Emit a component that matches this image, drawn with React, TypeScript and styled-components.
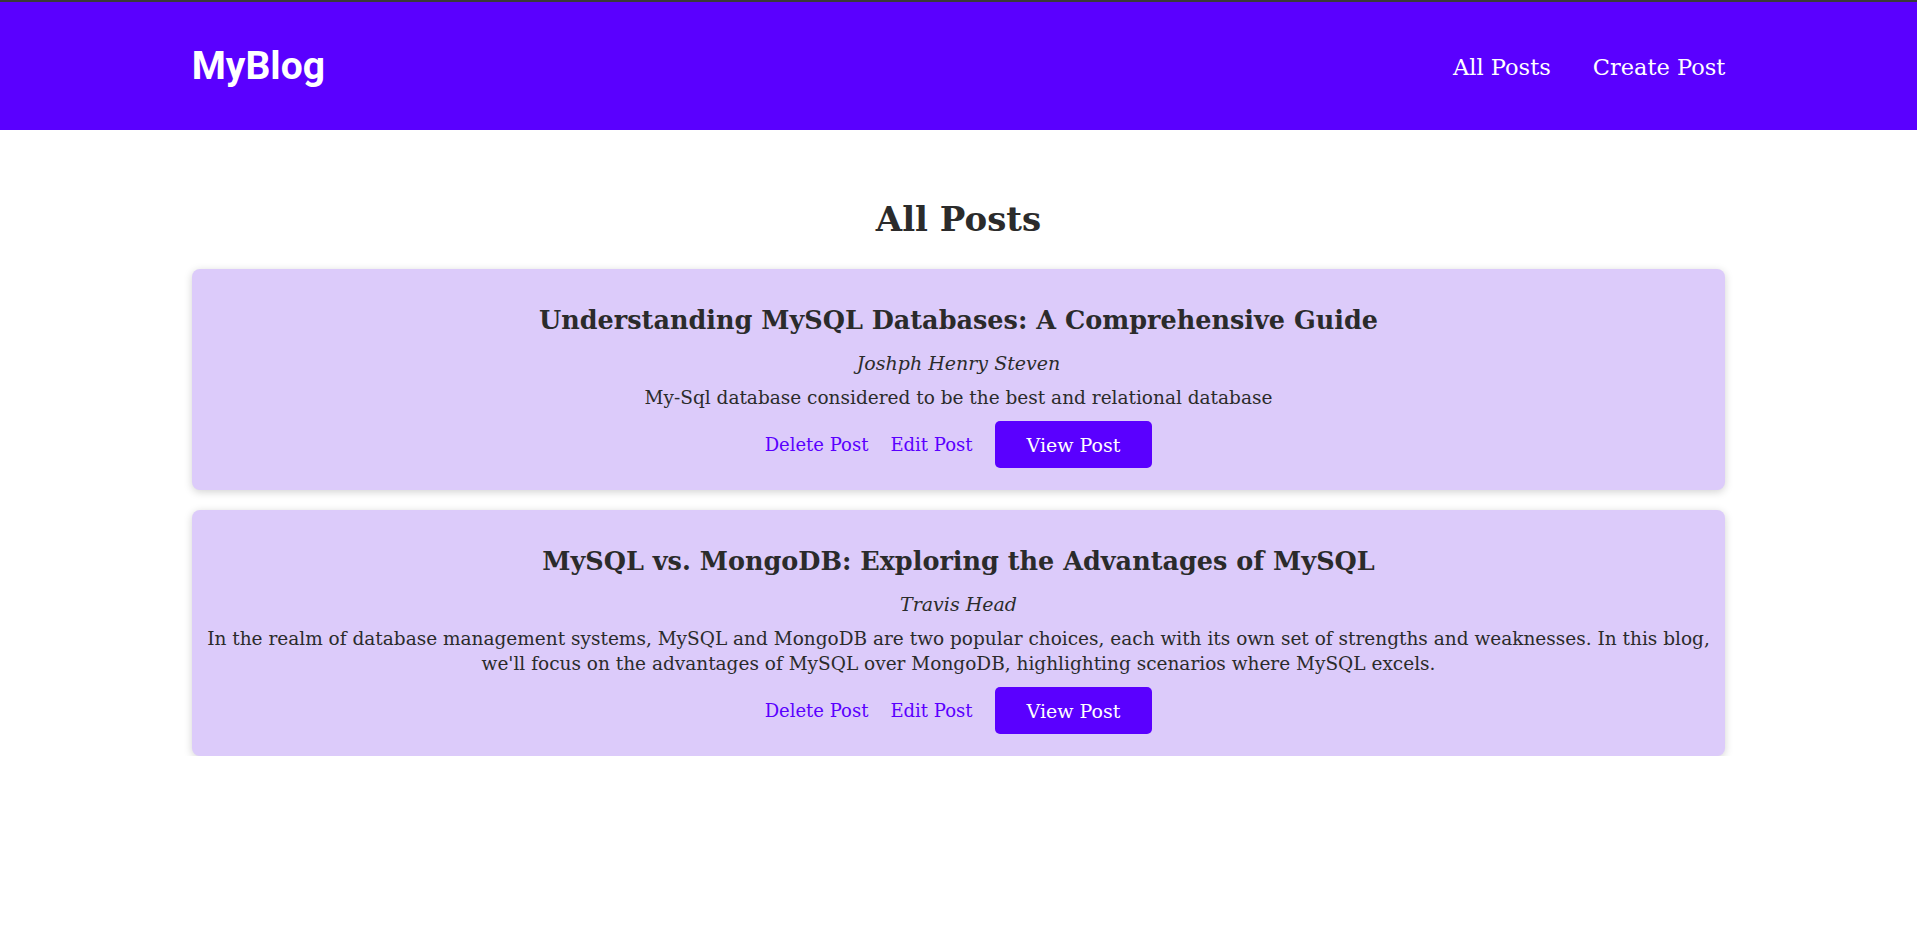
import React from "react";
import styled, { createGlobalStyle } from "styled-components";

const GlobalStyle = createGlobalStyle`
  body {
    margin: 0;
    background: #ffffff;
    font-family: "DejaVu Serif", serif;
    color: #2b2b2b;
  }
`;

const HeaderBar = styled.header`
  height: 128px;
  border-top: 2px solid #3a3a3a;
  background: #5a00ff;
  display: flex;
  justify-content: center;
`;

const HeaderInner = styled.div`
  width: 80%;
  display: flex;
  justify-content: space-between;
  align-items: center;
`;

const Logo = styled.a`
  font-family: Roboto, "Liberation Sans", sans-serif;
  font-weight: 700;
  font-size: 39px;
  color: #ffffff;
  text-decoration: none;
`;

const Nav = styled.nav`
  display: flex;
  gap: 42px;
  padding-top: 2px;
`;

const NavLink = styled.a`
  font-size: 22.5px;
  color: #ffffff;
  text-decoration: none;
`;

const Main = styled.main`
  width: 80%;
  margin: 0 auto;
  display: flex;
  flex-direction: column;
  gap: 20px;
`;

const PageTitle = styled.h1`
  margin: 59px 0 0;
  line-height: 60px;
  font-size: 34px;
  text-align: center;
  color: #2b2b2b;
`;

const Card = styled.article`
  background: #dccbfa;
  border-radius: 8px;
  box-shadow: 0 2px 8px rgba(0, 0, 0, 0.18);
  padding: 31px 10px 22px;
  text-align: center;
  display: flex;
  flex-direction: column;
  align-items: center;
`;

const Title = styled.h2`
  margin: 0;
  font-size: 25.5px;
  line-height: 40px;
  color: #2b2b2b;
`;

const Author = styled.p`
  margin: 10px 0 0;
  font-size: 19px;
  line-height: 26px;
  font-style: italic;
`;

const Desc = styled.p`
  margin: 9px 0 0;
  font-size: 18.5px;
  line-height: 25px;
`;

const Actions = styled.div`
  margin-top: 11px;
  display: flex;
  align-items: center;
  gap: 22px;
`;

const TextLink = styled.a`
  font-size: 18px;
  color: #5a00ff;
  text-decoration: none;
  cursor: pointer;
`;

const ViewButton = styled.button`
  height: 47px;
  padding: 0 32px;
  border: 0;
  border-radius: 5px;
  background: #5a00ff;
  color: #ffffff;
  font-family: inherit;
  font-size: 19px;
  cursor: pointer;
`;

const posts = [
  {
    id: 1,
    title: "Understanding MySQL Databases: A Comprehensive Guide",
    author: "Joshph Henry Steven",
    body: "My-Sql database considered to be the best and relational database",
  },
  {
    id: 2,
    title: "MySQL vs. MongoDB: Exploring the Advantages of MySQL",
    author: "Travis Head",
    body: "In the realm of database management systems, MySQL and MongoDB are two popular choices, each with its own set of strengths and weaknesses. In this blog, we'll focus on the advantages of MySQL over MongoDB, highlighting scenarios where MySQL excels.",
  },
];

export default function App() {
  return (
    <>
      <GlobalStyle />
      <HeaderBar>
        <HeaderInner>
          <Logo>MyBlog</Logo>
          <Nav>
            <NavLink>All Posts</NavLink>
            <NavLink>Create Post</NavLink>
          </Nav>
        </HeaderInner>
      </HeaderBar>
      <Main>
        <PageTitle>All Posts</PageTitle>
        {posts.map((p) => (
          <Card key={p.id}>
            <Title>{p.title}</Title>
            <Author>{p.author}</Author>
            <Desc>{p.body}</Desc>
            <Actions>
              <TextLink>Delete Post</TextLink>
              <TextLink>Edit Post</TextLink>
              <ViewButton>View Post</ViewButton>
            </Actions>
          </Card>
        ))}
      </Main>
    </>
  );
}
